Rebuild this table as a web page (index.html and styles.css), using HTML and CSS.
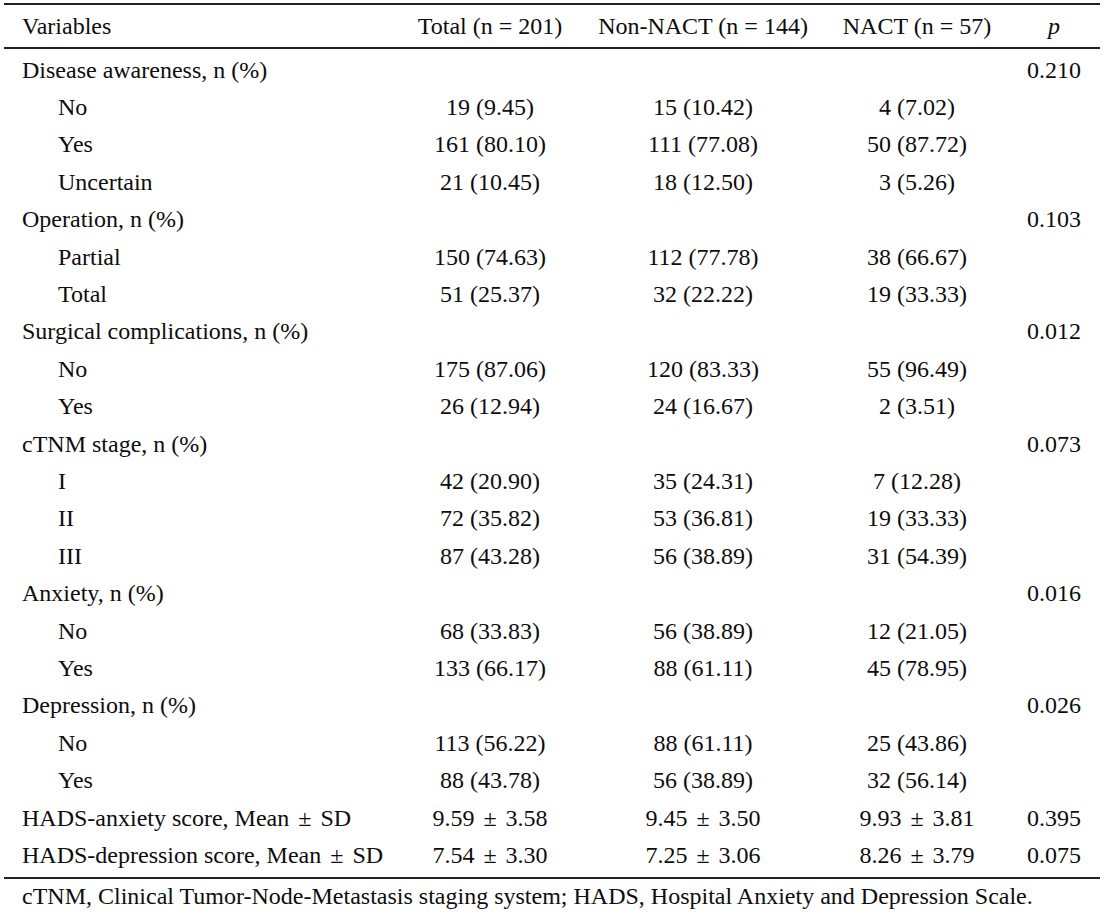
FILE: index.html
```html
<!DOCTYPE html>
<html lang="en">
<head>
<meta charset="utf-8">
<title>Table</title>
<link rel="stylesheet" href="styles.css">
</head>
<body>
<div class="wrap">
<table class="data">
<colgroup>
<col class="c-var"><col class="c-total"><col class="c-non"><col class="c-nact"><col class="c-p">
</colgroup>
<thead>
<tr><th class="left">Variables</th><th>Total (n = 201)</th><th>Non-NACT (n = 144)</th><th>NACT (n = 57)</th><th><i>p</i></th></tr>
</thead>
<tbody>
<tr class="first"><td class="left">Disease awareness, n (%)</td><td></td><td></td><td></td><td>0.210</td></tr>
<tr><td class="sub">No</td><td>19 (9.45)</td><td>15 (10.42)</td><td>4 (7.02)</td><td></td></tr>
<tr><td class="sub">Yes</td><td>161 (80.10)</td><td>111 (77.08)</td><td>50 (87.72)</td><td></td></tr>
<tr><td class="sub">Uncertain</td><td>21 (10.45)</td><td>18 (12.50)</td><td>3 (5.26)</td><td></td></tr>
<tr><td class="left">Operation, n (%)</td><td></td><td></td><td></td><td>0.103</td></tr>
<tr><td class="sub">Partial</td><td>150 (74.63)</td><td>112 (77.78)</td><td>38 (66.67)</td><td></td></tr>
<tr><td class="sub">Total</td><td>51 (25.37)</td><td>32 (22.22)</td><td>19 (33.33)</td><td></td></tr>
<tr><td class="left">Surgical complications, n (%)</td><td></td><td></td><td></td><td>0.012</td></tr>
<tr><td class="sub">No</td><td>175 (87.06)</td><td>120 (83.33)</td><td>55 (96.49)</td><td></td></tr>
<tr><td class="sub">Yes</td><td>26 (12.94)</td><td>24 (16.67)</td><td>2 (3.51)</td><td></td></tr>
<tr><td class="left">cTNM stage, n (%)</td><td></td><td></td><td></td><td>0.073</td></tr>
<tr><td class="sub">I</td><td>42 (20.90)</td><td>35 (24.31)</td><td>7 (12.28)</td><td></td></tr>
<tr><td class="sub">II</td><td>72 (35.82)</td><td>53 (36.81)</td><td>19 (33.33)</td><td></td></tr>
<tr><td class="sub">III</td><td>87 (43.28)</td><td>56 (38.89)</td><td>31 (54.39)</td><td></td></tr>
<tr><td class="left">Anxiety, n (%)</td><td></td><td></td><td></td><td>0.016</td></tr>
<tr><td class="sub">No</td><td>68 (33.83)</td><td>56 (38.89)</td><td>12 (21.05)</td><td></td></tr>
<tr><td class="sub">Yes</td><td>133 (66.17)</td><td>88 (61.11)</td><td>45 (78.95)</td><td></td></tr>
<tr><td class="left">Depression, n (%)</td><td></td><td></td><td></td><td>0.026</td></tr>
<tr><td class="sub">No</td><td>113 (56.22)</td><td>88 (61.11)</td><td>25 (43.86)</td><td></td></tr>
<tr><td class="sub">Yes</td><td>88 (43.78)</td><td>56 (38.89)</td><td>32 (56.14)</td><td></td></tr>
<tr><td class="left">HADS-anxiety score, Mean <span class="pm">±</span> SD</td><td>9.59 <span class="pm">±</span> 3.58</td><td>9.45 <span class="pm">±</span> 3.50</td><td>9.93 <span class="pm">±</span> 3.81</td><td>0.395</td></tr>
<tr class="last"><td class="left">HADS-depression score, Mean <span class="pm">±</span> SD</td><td>7.54 <span class="pm">±</span> 3.30</td><td>7.25 <span class="pm">±</span> 3.06</td><td>8.26 <span class="pm">±</span> 3.79</td><td>0.075</td></tr>
</tbody>
</table>
<p class="note">cTNM, Clinical Tumor-Node-Metastasis staging system; HADS, Hospital Anxiety and Depression Scale.</p>
</div>
</body>
</html>
```
FILE: styles.css
```css
html, body {
  margin: 0;
  padding: 0;
  background: #ffffff;
}
.wrap {
  padding: 3px 4px 0 4px;
  font-family: "Liberation Serif", "Times New Roman", serif;
  font-size: 24px;
  color: #0d0d0d;
}
.data {
  width: 1096px;
  border-collapse: collapse;
  table-layout: fixed;
  border-top: 2px solid #222;
  border-bottom: 2px solid #222;
}
.c-var { width: 396px; }
.c-total { width: 180px; }
.c-non { width: 246px; }
.c-nact { width: 182px; }
.c-p { width: 92px; }
.data th {
  font-weight: normal;
  text-align: center;
  height: 42px;
  padding: 0;
  line-height: 24px;
  border-bottom: 2px solid #222;
  white-space: nowrap;
}
.data td {
  text-align: center;
  height: 37.4px;
  padding: 0;
  line-height: 24px;
  white-space: nowrap;
  vertical-align: middle;
}
.pm { margin: 0 3px; }
.data .left { text-align: left; padding-left: 18px; }
.data .sub { text-align: left; padding-left: 54px; }
.data tr.first td { padding-top: 2px; }
.data tr.last td { padding-bottom: 3px; }
.note {
  margin: 0;
  padding: 4px 0 0 18px;
  line-height: 26px;
  white-space: nowrap;
}
```
